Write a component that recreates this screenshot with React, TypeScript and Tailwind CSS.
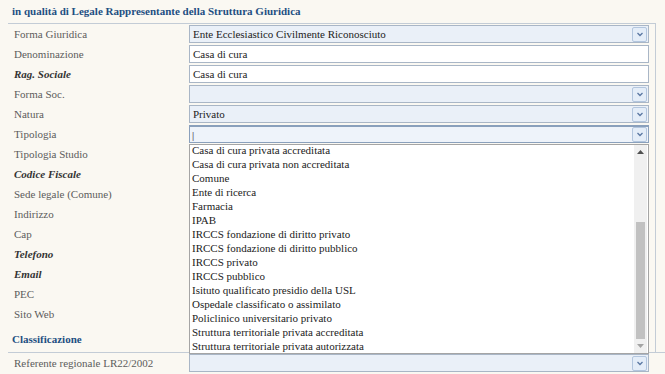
import React from "react";

type Row = { label: string; kind: "select" | "text" | "none"; value?: string; strong?: boolean; open?: boolean };

const rows: Row[] = [
  { label: "Forma Giuridica", kind: "select", value: "Ente Ecclesiastico Civilmente Riconosciuto" },
  { label: "Denominazione", kind: "text", value: "Casa di cura" },
  { label: "Rag. Sociale", kind: "text", value: "Casa di cura", strong: true },
  { label: "Forma Soc.", kind: "select" },
  { label: "Natura", kind: "select", value: "Privato" },
  { label: "Tipologia", kind: "select", open: true },
  { label: "Tipologia Studio", kind: "none" },
  { label: "Codice Fiscale", kind: "none", strong: true },
  { label: "Sede legale (Comune)", kind: "none" },
  { label: "Indirizzo", kind: "none" },
  { label: "Cap", kind: "none" },
  { label: "Telefono", kind: "none", strong: true },
  { label: "Email", kind: "none", strong: true },
  { label: "PEC", kind: "none" },
  { label: "Sito Web", kind: "none" },
];

const options = [
  "Casa di cura privata accreditata",
  "Casa di cura privata non accreditata",
  "Comune",
  "Ente di ricerca",
  "Farmacia",
  "IPAB",
  "IRCCS fondazione di diritto privato",
  "IRCCS fondazione di diritto pubblico",
  "IRCCS privato",
  "IRCCS pubblico",
  "Isituto qualificato presidio della USL",
  "Ospedale classificato o assimilato",
  "Policlinico universitario privato",
  "Struttura territoriale privata accreditata",
  "Struttura territoriale privata autorizzata",
];

function DropButton() {
  return (
    <div className="w-[15px] h-[15px] mr-[1px] border border-[#b3c6de] bg-[#e4edf8] rounded-[2px] flex items-center justify-center">
      <svg width="8" height="5" viewBox="0 0 8 5">
        <path d="M1.5 1 L4 3.5 L6.5 1" fill="none" stroke="#5a77a3" strokeWidth="1.3" />
      </svg>
    </div>
  );
}

function Field({ row }: { row: Row }) {
  if (row.kind === "none") return null;
  if (row.kind === "text") {
    return (
      <div className="w-[460px] h-[18px] border border-[#a9b6c6] bg-white flex items-center px-[3px] text-[#222]">
        {row.value}
      </div>
    );
  }
  return (
    <div
      className={
        row.open
          ? "w-[460px] h-[18px] border border-[#8aa0bc] border-t-2 bg-[#eef3fa] flex items-center justify-between pl-[2px] text-[#222]"
          : "w-[460px] h-[18px] border border-[#a9b6c6] bg-[#eaf0f8] flex items-center justify-between pl-[3px] text-[#222]"
      }
    >
      <span>{row.open ? "|" : row.value ?? ""}</span>
      <DropButton />
    </div>
  );
}

export default function App() {
  return (
    <div className="w-[665px] h-[374px] overflow-hidden relative bg-[#faf8f2] text-[11px] leading-[14px] font-['Liberation_Serif',serif]">
      <div className="h-[23px] pl-3 pt-[4px] font-bold text-[#1e4f82]">
        in qualità di Legale Rappresentante della Struttura Giuridica
      </div>

      <div className="ml-2 w-[648px] border-t border-r border-[#c3ccd6]">
        {rows.map((row) => (
          <div key={row.label} className="h-[20px] flex items-center">
            <div
              className={
                row.strong
                  ? "w-[181px] pl-[6px] font-bold italic text-[#333]"
                  : "w-[181px] pl-[6px] text-[#5c5c5c]"
              }
            >
              {row.label}
            </div>
            <Field row={row} />
          </div>
        ))}
        <div className="h-[28px] pl-1 pt-[8px] font-bold text-[#1e4f82]">Classificazione</div>
      </div>

      <div className="ml-2 border-t border-[#c3ccd6]">
        <div className="h-[20px] flex items-center">
          <div className="w-[181px] pl-[6px] text-[#5c5c5c]">Referente regionale LR22/2002</div>
          <Field row={{ label: "ref", kind: "select" }} />
        </div>
      </div>

      {/* open listbox of Tipologia */}
      <div className="absolute left-[189px] top-[144px] w-[460px] h-[210px] border border-[#a5a5a5] bg-white flex overflow-hidden">
        <div className="flex-1 flex flex-col pl-[2px] -mt-[2px] text-[#222]">
          {options.map((o) => (
            <div key={o} className="h-[14px] leading-[14px]">
              {o}
            </div>
          ))}
        </div>
        <div className="w-[13px] mr-[1px] bg-[#f0f0f0] flex flex-col items-center">
          <div className="h-[14px] flex items-center justify-center">
            <svg width="7" height="4" viewBox="0 0 7 4">
              <path d="M0 4 L3.5 0 L7 4 Z" fill="#505050" />
            </svg>
          </div>
          <div className="mt-[63px] w-[9px] h-[118px] bg-[#c1c1c1]" />
          <div className="mt-auto h-[14px] flex items-center justify-center">
            <svg width="7" height="4" viewBox="0 0 7 4">
              <path d="M0 0 L7 0 L3.5 4 Z" fill="#a3a3a3" />
            </svg>
          </div>
        </div>
      </div>
    </div>
  );
}
